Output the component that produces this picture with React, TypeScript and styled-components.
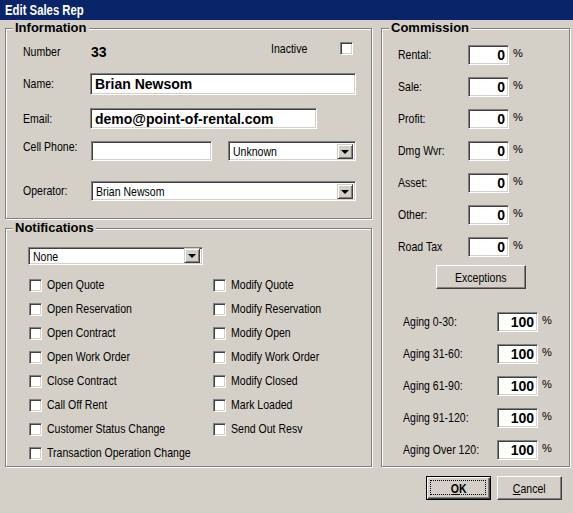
import styled, { createGlobalStyle } from 'styled-components';

const UI = `"Liberation Sans", Arial, sans-serif`;

const FACE = '#d4d0c8';
const SHADOW = '#808080';
const DARK = '#404040';

const GlobalStyle = createGlobalStyle`
  html, body {
    margin: 0;
    padding: 0;
    background: ${FACE};
  }
`;

const Window = styled.div`
  width: 573px;
  height: 513px;
  background: ${FACE};
  font-family: ${UI};
  font-size: 13px;
  color: #000;
  overflow: hidden;
`;

// dialog text is drawn in a narrow face, squeezed from the regular one
const Narrow = styled.span<{ $center?: boolean }>`
  display: inline-block;
  white-space: nowrap;
  transform: scaleX(0.81);
  transform-origin: ${(p) => (p.$center ? 'center' : 'left')} center;
`;

const TitleBar = styled.div`
  height: 20px;
  line-height: 20px;
  padding-left: 5px;
  background: #0a246a;
  color: #fff;
  font-weight: bold;
  font-size: 14px;
`;

const Body = styled.div`
  display: grid;
  grid-template-columns: 367px 189px;
  column-gap: 9px;
  padding: 8px 0 0 5px;
`;

const Column = styled.div`
  display: flex;
  flex-direction: column;
  gap: 9px;
`;

const GroupBox = styled.div<{ $height: number }>`
  position: relative;
  box-sizing: border-box;
  height: ${(p) => p.$height}px;
  border: 1px solid ${SHADOW};
  box-shadow: inset 1px 1px 0 #fff, 1px 1px 0 #fff;
  display: flex;
  flex-direction: column;
`;

const GroupTitle = styled.div<{ $left: number }>`
  position: absolute;
  top: -9px;
  left: ${(p) => p.$left}px;
  padding: 0 2px;
  background: ${FACE};
  font-weight: bold;
  font-size: 13px;
  line-height: 16px;
`;

const FieldRow = styled.div<{ $mt: number; $h: number }>`
  display: flex;
  align-items: center;
  margin-top: ${(p) => p.$mt}px;
  height: ${(p) => p.$h}px;
  padding-left: 17px;
`;

const FieldLabel = styled.div<{ $w: number; $lift?: number }>`
  width: ${(p) => p.$w}px;
  flex: none;
  line-height: 14px;
  white-space: nowrap;
  margin-bottom: ${(p) => (p.$lift ?? 0) * 2}px;
`;

const Value = styled.div`
  width: 180px;
  font-weight: bold;
  font-size: 14px;
  line-height: 16px;
`;

const InactiveGroup = styled.div`
  display: flex;
  align-items: center;
  margin-bottom: 6px;
`;

const Sunken = styled.div<{ $w: number; $h: number }>`
  box-sizing: border-box;
  width: ${(p) => p.$w}px;
  height: ${(p) => p.$h}px;
  flex: none;
  background: #fff;
  border: 1px solid;
  border-color: ${SHADOW} #fff #fff ${SHADOW};
  box-shadow: inset 1px 1px 0 ${DARK}, inset -1px -1px 0 ${FACE};
  display: flex;
  align-items: center;
  white-space: nowrap;
  overflow: hidden;
`;

const TextField = styled(Sunken)<{ $bold?: boolean }>`
  padding-left: 4px;
  font-weight: ${(p) => (p.$bold ? 'bold' : 'normal')};
  font-size: ${(p) => (p.$bold ? '14px' : '13px')};
`;

const ComboBox = styled(Sunken)<{ $ml?: number }>`
  position: relative;
  margin-left: ${(p) => p.$ml ?? 0}px;
  padding-left: 4px;
`;

const DropButton = styled.div`
  position: absolute;
  right: 2px;
  bottom: 1px;
  box-sizing: border-box;
  width: 16px;
  height: 15px;
  background: ${FACE};
  border: 1px solid;
  border-color: ${FACE} ${DARK} ${DARK} ${FACE};
  box-shadow: inset 1px 1px 0 #fff, inset -1px -1px 0 ${SHADOW};
  display: flex;
  align-items: center;
  justify-content: center;
`;

const Arrow = styled.div`
  width: 0;
  height: 0;
  border-left: 4px solid transparent;
  border-right: 4px solid transparent;
  border-top: 4px solid #000;
`;

const CheckBox = styled.div`
  box-sizing: border-box;
  width: 13px;
  height: 13px;
  flex: none;
  background: #fff;
  border: 1px solid;
  border-color: ${SHADOW} #fff #fff ${SHADOW};
  box-shadow: inset 1px 1px 0 ${DARK}, inset -1px -1px 0 ${FACE};
`;

const NotifyCombo = styled.div`
  margin: 18px 0 0 22px;
`;

const CheckGrid = styled.div`
  display: grid;
  grid-auto-flow: column;
  grid-template-rows: repeat(8, 24px);
  grid-template-columns: 184px 150px;
  margin-top: 8px;
  padding-left: 23px;
`;

const CheckItem = styled.div`
  display: flex;
  align-items: center;
  gap: 5px;
  line-height: 14px;
  min-width: 0;
`;

const RateRow = styled.div<{ $pad: number }>`
  display: flex;
  align-items: center;
  height: 32px;
  padding-left: ${(p) => p.$pad}px;
`;

const RateField = styled(Sunken)`
  justify-content: flex-end;
  padding-right: 3px;
  font-weight: bold;
  font-size: 14px;
`;

const Percent = styled.span`
  margin: 0 0 3px 4px;
  font-size: 11px;
  line-height: 11px;
`;

const RateList = styled.div<{ $mt: number }>`
  display: flex;
  flex-direction: column;
  margin-top: ${(p) => p.$mt}px;
`;

const Button = styled.div<{ $w: number; $default?: boolean }>`
  position: relative;
  box-sizing: border-box;
  width: ${(p) => p.$w}px;
  height: 24px;
  flex: none;
  background: ${FACE};
  border: 1px solid;
  border-color: ${(p) => (p.$default ? '#000' : `#fff ${DARK} ${DARK} #fff`)};
  box-shadow: ${(p) =>
    p.$default
      ? `inset 1px 1px 0 #fff, inset -1px -1px 0 ${DARK}, inset -2px -2px 0 ${SHADOW}`
      : `inset -1px -1px 0 ${SHADOW}`};
  display: flex;
  align-items: center;
  justify-content: center;
  font-weight: ${(p) => (p.$default ? 'bold' : 'normal')};
  u {
    text-decoration: underline;
  }
`;

const FocusRing = styled.div`
  position: absolute;
  inset: 3px 4px 4px 3px;
  border: 1px dotted #000;
`;

const ExceptionsWrap = styled.div`
  margin: 2px 0 0 54px;
`;

const ButtonBar = styled.div`
  display: flex;
  justify-content: flex-end;
  gap: 6px;
  margin-top: 9px;
  padding-right: 11px;
`;

function Combo({ w, h, text, ml }: { w: number; h: number; text: string; ml?: number }) {
  return (
    <ComboBox $w={w} $h={h} $ml={ml}>
      <Narrow>{text}</Narrow>
      <DropButton>
        <Arrow />
      </DropButton>
    </ComboBox>
  );
}

const leftAlerts = [
  'Open Quote',
  'Open Reservation',
  'Open Contract',
  'Open Work Order',
  'Close Contract',
  'Call Off Rent',
  'Customer Status Change',
  'Transaction Operation Change',
];

const rightAlerts = [
  'Modify Quote',
  'Modify Reservation',
  'Modify Open',
  'Modify Work Order',
  'Modify Closed',
  'Mark Loaded',
  'Send Out Resv',
];

const commissions = ['Rental:', 'Sale:', 'Profit:', 'Dmg Wvr:', 'Asset:', 'Other:', 'Road Tax'];
const aging = ['Aging 0-30:', 'Aging 31-60:', 'Aging 61-90:', 'Aging 91-120:', 'Aging Over 120:'];

export default function App() {
  return (
    <Window>
      <GlobalStyle />
      <TitleBar>
        <Narrow>Edit Sales Rep</Narrow>
      </TitleBar>
      <Body>
        <Column>
          <GroupBox $height={191}>
            <GroupTitle $left={7}>Information</GroupTitle>
            <FieldRow $mt={13} $h={19}>
              <FieldLabel $w={68}>
                <Narrow>Number</Narrow>
              </FieldLabel>
              <Value>33</Value>
              <InactiveGroup>
                <FieldLabel $w={69}>
                  <Narrow>Inactive</Narrow>
                </FieldLabel>
                <CheckBox />
              </InactiveGroup>
            </FieldRow>
            <FieldRow $mt={12} $h={22}>
              <FieldLabel $w={67}>
                <Narrow>Name:</Narrow>
              </FieldLabel>
              <TextField $w={266} $h={22} $bold>
                Brian Newsom
              </TextField>
            </FieldRow>
            <FieldRow $mt={13} $h={21}>
              <FieldLabel $w={67}>
                <Narrow>Email:</Narrow>
              </FieldLabel>
              <TextField $w={227} $h={21} $bold>
                demo@point-of-rental.com
              </TextField>
            </FieldRow>
            <FieldRow $mt={12} $h={20}>
              <FieldLabel $w={68} $lift={4}>
                <Narrow>Cell Phone:</Narrow>
              </FieldLabel>
              <TextField $w={121} $h={20} />
              <Combo w={128} h={20} ml={16} text="Unknown" />
            </FieldRow>
            <FieldRow $mt={20} $h={20}>
              <FieldLabel $w={68}>
                <Narrow>Operator:</Narrow>
              </FieldLabel>
              <Combo w={265} h={20} text="Brian Newsom" />
            </FieldRow>
          </GroupBox>

          <GroupBox $height={239}>
            <GroupTitle $left={7}>Notifications</GroupTitle>
            <NotifyCombo>
              <Combo w={175} h={18} text="None" />
            </NotifyCombo>
            <CheckGrid>
              {[...leftAlerts, ...rightAlerts].map((name) => (
                <CheckItem key={name}>
                  <CheckBox />
                  <Narrow>{name}</Narrow>
                </CheckItem>
              ))}
            </CheckGrid>
          </GroupBox>
        </Column>

        <GroupBox $height={439}>
          <GroupTitle $left={7}>Commission</GroupTitle>
          <RateList $mt={10}>
            {commissions.map((name) => (
              <RateRow key={name} $pad={16}>
                <FieldLabel $w={70}>
                  <Narrow>{name}</Narrow>
                </FieldLabel>
                <RateField $w={41} $h={20}>
                  0
                </RateField>
                <Percent>%</Percent>
              </RateRow>
            ))}
          </RateList>
          <ExceptionsWrap>
            <Button $w={90}>
              <Narrow $center>Exceptions</Narrow>
            </Button>
          </ExceptionsWrap>
          <RateList $mt={17}>
            {aging.map((name) => (
              <RateRow key={name} $pad={21}>
                <FieldLabel $w={94}>
                  <Narrow>{name}</Narrow>
                </FieldLabel>
                <RateField $w={41} $h={20}>
                  100
                </RateField>
                <Percent>%</Percent>
              </RateRow>
            ))}
          </RateList>
        </GroupBox>
      </Body>

      <ButtonBar>
        <Button $w={65} $default>
          <FocusRing />
          <Narrow $center>
            <u>O</u>K
          </Narrow>
        </Button>
        <Button $w={65}>
          <Narrow $center>
            <u>C</u>ancel
          </Narrow>
        </Button>
      </ButtonBar>
    </Window>
  );
}
